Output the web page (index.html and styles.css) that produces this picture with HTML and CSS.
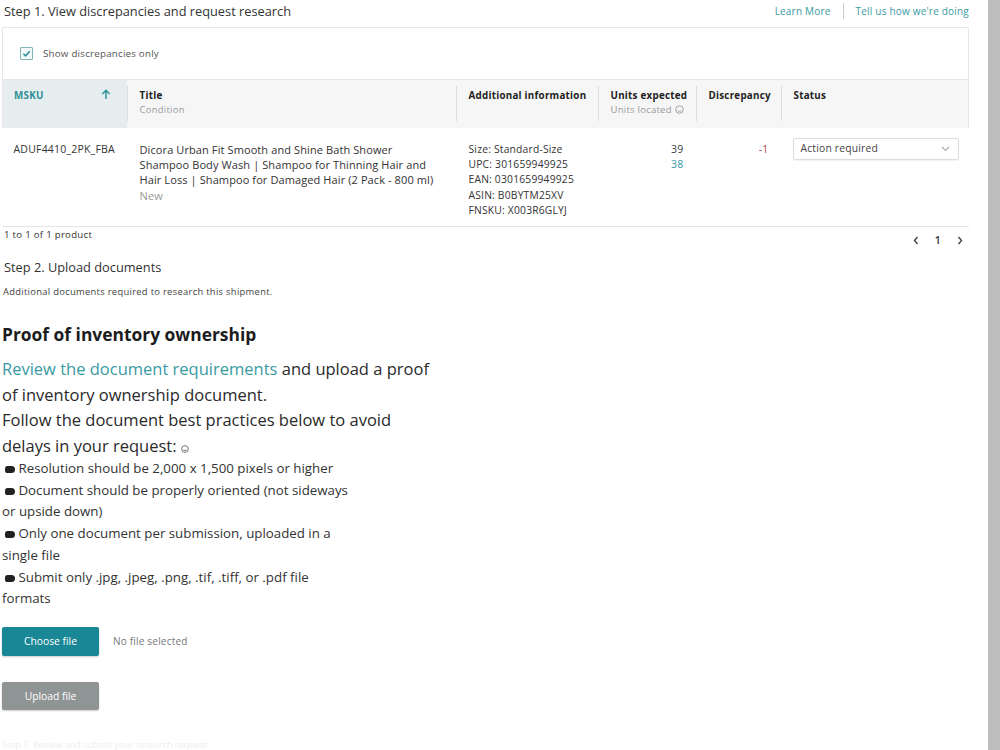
FILE: index.html
```html
<!DOCTYPE html>
<html lang="en">
<head>
    <meta charset="UTF-8">
    <meta name="viewport" content="width=device-width, initial-scale=1.0">
    <title>Inventory reconciliation</title>
    <link rel="stylesheet" href="styles.css">
</head>
<body>
    <div class="page">
        <main class="content">
            <!-- STEP 1 -->
            <div class="step-head">
                <h1 class="step-title">Step 1. View discrepancies and request research</h1>
                <div class="step-links">
                    <a href="#">Learn More</a>
                    <span class="link-sep"></span>
                    <a href="#">Tell us how we're doing</a>
                </div>
            </div>

            <label class="filter">
                <span class="checkbox">
                    <svg width="9" height="9" viewBox="0 0 10 10"><path d="M1.5 5.2 L4 7.6 L8.6 2.4" fill="none" stroke="#2f8f99" stroke-width="1.7"/></svg>
                </span>
                Show discrepancies only
            </label>

            <table class="grid">
                <colgroup>
                    <col class="c-msku">
                    <col class="c-title">
                    <col class="c-info">
                    <col class="c-units">
                    <col class="c-disc">
                    <col class="c-status">
                </colgroup>
                <thead>
                    <tr>
                        <th class="sorted">
                            <div class="th-in">
                                <span>MSKU</span>
                                <svg width="10" height="11" viewBox="0 0 10 11"><path d="M5 10 V1.5 M1.3 5 L5 1.3 L8.7 5" fill="none" stroke="#2f8f99" stroke-width="1.5"/></svg>
                            </div>
                        </th>
                        <th><div class="th-in"><span>Title</span><small>Condition</small></div></th>
                        <th><div class="th-in"><span>Additional information</span></div></th>
                        <th><div class="th-in"><span>Units expected</span><small>Units located <svg class="info" width="9" height="9" viewBox="0 0 10 10"><circle cx="5" cy="5" r="4.2" fill="none" stroke="#999" stroke-width="1"/><path d="M3 6.3 Q5 7.8 7 6.3" fill="none" stroke="#999" stroke-width="1"/></svg></small></div></th>
                        <th><div class="th-in"><span>Discrepancy</span></div></th>
                        <th class="last"><div class="th-in"><span>Status</span></div></th>
                    </tr>
                </thead>
                <tbody>
                    <tr>
                        <td class="msku">ADUF4410_2PK_FBA</td>
                        <td class="title">
                            Dicora Urban Fit Smooth and Shine Bath Shower Shampoo Body Wash | Shampoo for Thinning Hair and Hair Loss | Shampoo for Damaged Hair (2 Pack - 800 ml)
                            <span class="cond">New</span>
                        </td>
                        <td class="info-list">
                            Size: Standard-Size<br>
                            UPC: 301659949925<br>
                            EAN: 0301659949925<br>
                            ASIN: B0BYTM25XV<br>
                            FNSKU: X003R6GLYJ
                        </td>
                        <td class="num">39<br><span class="located">38</span></td>
                        <td class="num disc">-1</td>
                        <td class="status">
                            <div class="select">
                                Action required
                                <svg width="9" height="6" viewBox="0 0 9 6"><path d="M1 1 L4.5 4.5 L8 1" fill="none" stroke="#aaa" stroke-width="1.1"/></svg>
                            </div>
                        </td>
                    </tr>
                </tbody>
            </table>

            <div class="table-foot">
                <span>1 to 1 of 1 product</span>
                <div class="pager">
                    <svg width="6" height="9" viewBox="0 0 6 9"><path d="M4.5 1 L1.5 4.5 L4.5 8" fill="none" stroke="#444" stroke-width="1.4"/></svg>
                    <span class="page-num">1</span>
                    <svg width="6" height="9" viewBox="0 0 6 9"><path d="M1.5 1 L4.5 4.5 L1.5 8" fill="none" stroke="#444" stroke-width="1.4"/></svg>
                </div>
            </div>

            <!-- STEP 2 -->
            <h2 class="step2-title">Step 2. Upload documents</h2>
            <p class="step2-sub">Additional documents required to research this shipment.</p>

            <section class="proof">
                <h3>Proof of inventory ownership</h3>
                <p class="lead">
                    <a href="#">Review the document requirements</a> and upload a proof of inventory ownership document.<br>
                    Follow the document best practices below to avoid delays in your request:
                    <svg class="info-sm" width="8" height="8" viewBox="0 0 10 10"><circle cx="5" cy="5" r="4.2" fill="none" stroke="#666" stroke-width="1.1"/><path d="M3 6.2 Q5 7.6 7 6.2" fill="none" stroke="#666" stroke-width="1.1"/></svg>
                </p>
                <ul class="practices">
                    <li><i class="dot"></i> Resolution should be 2,000 x 1,500 pixels or higher</li>
                    <li><i class="dot"></i> Document should be properly oriented (not sideways or upside down)</li>
                    <li><i class="dot"></i> Only one document per submission, uploaded in a single file</li>
                    <li><i class="dot"></i> Submit only .jpg, .jpeg, .png, .tif, .tiff, or .pdf file formats</li>
                </ul>

                <div class="file-row">
                    <button class="btn btn-choose">Choose file</button>
                    <span class="file-name">No file selected</span>
                </div>
                <button class="btn btn-upload">Upload file</button>
            </section>

            <p class="next-step">Step 3. Review and submit your research request</p>
        </main>
        <div class="scroll-track"></div>
    </div>
</body>
</html>
```

FILE: styles.css
```css
body {
    margin: 0;
    background: #fff;
    font-family: "Open Sans", "Noto Sans", sans-serif;
    color: #333;
    overflow: hidden;
}

.page {
    display: flex;
    height: 750px;
}

.content {
    flex: 1;
    padding: 0 19px 0 2px;
}

.scroll-track {
    width: 12px;
    background: #bdbdbd;
}

a {
    color: #3a9aa2;
    text-decoration: none;
}

/* STEP HEADER */
.step-head {
    display: flex;
    justify-content: space-between;
    align-items: center;
    height: 22px;
    margin-bottom: 5px;
}

.step-title {
    margin: 0 0 0 2px;
    font-size: 12.8px;
    font-weight: 400;
    color: #333;
}

.step-links {
    display: flex;
    align-items: center;
    font-size: 10px;
    letter-spacing: 0.2px;
}

.link-sep {
    width: 1px;
    height: 16px;
    background: #ccc;
    margin: 0 12px;
}

/* FILTER ROW */
.filter {
    display: flex;
    align-items: center;
    gap: 10px;
    height: 51px;
    padding-left: 17px;
    font-size: 9.8px;
    letter-spacing: 0.2px;
    color: #555;
    border: 1px solid #e7e7e7;
}

.checkbox {
    width: 11px;
    height: 11px;
    border: 1px solid #86b3b8;
    border-radius: 1px;
    display: flex;
    align-items: center;
    justify-content: center;
    background: #f4fafa;
}

/* TABLE */
.grid {
    width: 100%;
    border-collapse: collapse;
    table-layout: fixed;
}

.c-msku { width: 124px; }
.c-title { width: 329px; }
.c-info { width: 142px; }
.c-units { width: 98px; }
.c-disc { width: 85px; }

.grid th {
    background: #f6f6f6;
    text-align: left;
    vertical-align: top;
    padding: 6px 0 7px;
    height: 35px;
    font-size: 9.8px;
    letter-spacing: 0.25px;
    color: #222;
}

.grid th.sorted {
    background: #e6edef;
    border-left: 1px solid #e7e7e7;
}

.grid th.last {
    border-right: 1px solid #e7e7e7;
}

.th-in {
    border-left: 1px solid #dcdcdc;
    padding: 3px 0 0 12px;
    height: 32px;
    display: flex;
    flex-direction: column;
    gap: 1px;
}

.th-in span {
    font-weight: 700;
}

.th-in small {
    font-size: 9.5px;
    font-weight: 400;
    color: #9a9a9a;
    display: flex;
    align-items: center;
    gap: 3px;
}

.sorted .th-in {
    border-left: none;
    flex-direction: row;
    justify-content: space-between;
    padding: 3px 16px 0 11px;
    color: #2f8f99;
}

.grid td {
    vertical-align: top;
    padding: 14px 0 8px 13px;
    font-size: 10.5px;
    line-height: 15.2px;
    letter-spacing: 0.2px;
    color: #333;
    border-bottom: 1px solid #e4e4e4;
}

.grid td.msku {
    padding-left: 11px;
    font-size: 10.5px;
}

.grid td.title {
    padding-right: 18px;
    font-size: 11px;
    letter-spacing: 0.1px;
}

.cond {
    display: block;
    color: #999;
}

.grid td.info-list {
    font-size: 10.3px;
}

.grid td.num {
    text-align: right;
    padding-right: 12px;
    color: #444;
}

.located {
    color: #3a9aa2;
}

.grid td.disc {
    color: #b0413e;
    padding-right: 12px;
}

.grid td.status {
    padding: 10px 10px 0 12px;
}

.select {
    display: flex;
    justify-content: space-between;
    align-items: center;
    height: 20px;
    padding: 0 8px 0 7px;
    border: 1px solid #dcdcdc;
    border-radius: 2px;
    box-shadow: 0 1px 1px rgba(0,0,0,0.06);
    font-size: 10.3px;
    color: #444;
}

.table-foot {
    display: flex;
    justify-content: space-between;
    align-items: flex-start;
    font-size: 9.6px;
    letter-spacing: 0.3px;
    color: #333;
    padding: 1px 6px 0 2px;
    height: 29px;
}

.pager {
    display: flex;
    align-items: center;
    gap: 16px;
    font-size: 10.5px;
    margin-top: 5px;
}

.page-num {
    color: #333;
    font-weight: 600;
}

/* STEP 2 */
.step2-title {
    margin: 0 0 0 2px;
    font-size: 12.8px;
    font-weight: 400;
    color: #333;
    line-height: 20px;
}

.step2-sub {
    margin: 8px 0 0 1px;
    font-size: 9.4px;
    line-height: 14px;
    letter-spacing: 0.3px;
    color: #444;
}

.proof h3 {
    margin: 23px 0 0;
    font-size: 17.4px;
    font-weight: 700;
    color: #1c1c1c;
    line-height: 24px;
}

.lead {
    width: 436px;
    margin: 10px 0 0;
    font-size: 16.5px;
    line-height: 25.5px;
    color: #2a2a2a;
}

.info-sm {
    vertical-align: -1px;
}

.practices {
    list-style: none;
    margin: 0;
    padding: 0;
    width: 358px;
    font-size: 13.3px;
    line-height: 21.7px;
    color: #333;
}

.dot {
    display: inline-block;
    width: 10px;
    height: 7px;
    border-radius: 3px 4px 4px 3px;
    background: #222;
    margin: 0 0 0 3px;
}

/* BUTTONS */
.file-row {
    display: flex;
    align-items: center;
    gap: 14px;
    margin-top: 17px;
}

.btn {
    width: 97px;
    height: 29px;
    border: none;
    border-radius: 2px;
    color: #fff;
    font-family: inherit;
    font-size: 10.3px;
    box-shadow: 0 1px 2px rgba(0,0,0,0.2);
}

.btn-choose {
    background: #1a8797;
}

.btn-upload {
    margin-top: 26px;
    height: 28px;
    background: #8f9494;
}

.file-name {
    font-size: 10px;
    letter-spacing: 0.2px;
    color: #777;
}

.next-step {
    margin: 29px 0 0;
    font-size: 9px;
    line-height: 12px;
    color: #eee;
}
```
